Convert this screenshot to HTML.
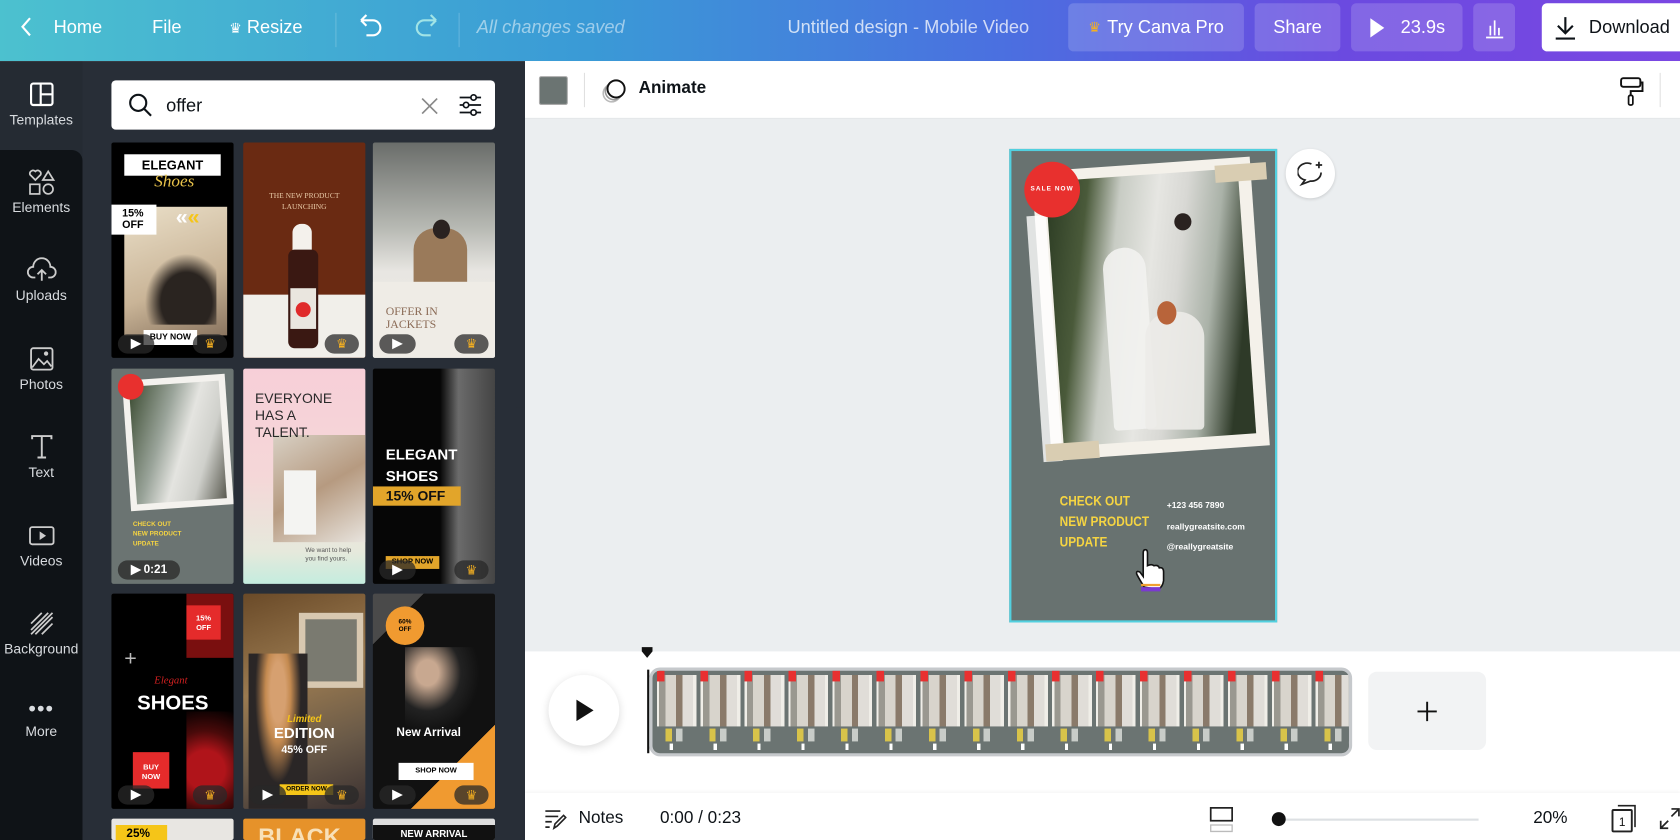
<!DOCTYPE html>
<html><head><meta charset="utf-8">
<style>
*{box-sizing:border-box;margin:0;padding:0}
html,body{width:1680px;height:840px;overflow:hidden;background:#fff;font-family:"Liberation Sans",sans-serif}
#w{position:absolute;left:0;top:0;width:1568px;height:784px;transform:scale(1.07143);transform-origin:0 0;overflow:hidden}
.a{position:absolute}
.top{left:0;top:0;width:1568px;height:57px;background:linear-gradient(90deg,#4cc1cf 0%,#3a9ad6 35%,#4b6fe0 60%,#6b4ae0 80%,#7a47e2 100%)}
.tt{position:absolute;color:#fff;font-size:17px;top:16px}
.btn{position:absolute;top:3px;height:45px;background:rgba(255,255,255,.16);border-radius:5px;color:#fff;font-size:17px;display:flex;align-items:center;justify-content:center}
.side{left:0;top:57px;width:77px;height:727px;background:#252b33}
.sdark{left:0;top:140px;width:77px;height:644px;background:#0f1317;border-top-right-radius:10px}
.si{position:absolute;left:0;width:77px;text-align:center;color:#d8dbdf;font-size:13px}
.si svg{display:block;margin:0 auto 4px}
.panel{left:77px;top:57px;width:413px;height:727px;background:#282e37}
.th{position:absolute;width:114px;height:201px;overflow:hidden;border-radius:2px}
.pl{position:absolute;left:6px;bottom:4px;width:34px;height:18px;border-radius:9px;background:rgba(40,40,40,.75)}
.pl:after{content:"";position:absolute;left:12px;top:4px;border-left:10px solid #fff;border-top:5px solid transparent;border-bottom:5px solid transparent}
.cr{position:absolute;right:6px;bottom:4px;width:32px;height:18px;border-radius:9px;background:rgba(40,40,40,.75);color:#f5b021;font-size:12px;text-align:center;line-height:18px}
.canvas{left:490px;top:111px;width:1078px;height:497px;background:#ebeef0}
.tool{left:490px;top:57px;width:1078px;height:54px;background:#fff;border-bottom:1px solid #e3e6e8}
.bot{left:490px;top:608px;width:1078px;height:176px;background:#fff}
</style></head><body><div id="w">
<div class="a top"></div>
<svg class="a" style="left:18px;top:15px" width="14" height="20"><path d="M10 2 L3 10 L10 18" stroke="#fff" stroke-width="2" fill="none"/></svg>
<div class="tt" style="left:50px">Home</div>
<div class="tt" style="left:142px">File</div>
<div class="tt" style="left:214px"><span style="font-size:13px">♛</span> Resize</div>
<div class="a" style="left:313px;top:12px;width:1px;height:32px;background:rgba(255,255,255,.2)"></div>
<svg class="a" style="left:333px;top:13px" width="26" height="24"><path d="M4 6 H15 A7 7 0 0 1 15 20 H9 M4 6 L9 1 M4 6 L9 11" stroke="#fff" stroke-width="2" fill="none"/></svg>
<svg class="a" style="left:385px;top:13px" width="26" height="24"><path d="M22 6 H11 A7 7 0 0 0 11 20 H17 M22 6 L17 1 M22 6 L17 11" stroke="#cfe" stroke-opacity=".7" stroke-width="2" fill="none"/></svg>
<div class="a" style="left:428px;top:12px;width:1px;height:32px;background:rgba(255,255,255,.2)"></div>
<div class="tt" style="left:445px;font-style:italic;color:rgba(255,255,255,.5)">All changes saved</div>
<div class="tt" style="left:735px;color:rgba(255,255,255,.75)">Untitled design - Mobile Video</div>
<div class="btn" style="left:997px;width:164px"><span style="color:#f5b021;font-size:13px;margin-right:6px">♛</span>Try Canva Pro</div>
<div class="btn" style="left:1171px;width:80px">Share</div>
<div class="btn" style="left:1261px;width:104px"><svg width="16" height="20" style="margin-right:14px"><path d="M2 1 L15 10 L2 19Z" fill="#fff"/></svg>23.9s</div>
<div class="btn" style="left:1375px;width:39px"><svg width="20" height="20"><path d="M2 19H18M6 17V8M10 17V3M14 17V10" stroke="#fff" stroke-width="1.6" fill="none"/></svg></div>
<div class="a" style="left:1439px;top:3px;width:140px;height:45px;background:#fff;border-radius:5px;color:#0e1318;font-size:17px;line-height:45px;padding-left:44px">Download</div>
<svg class="a" style="left:1450px;top:14px" width="22" height="24"><path d="M11 2V17M4 10L11 17L18 10M2 22H20" stroke="#0e1318" stroke-width="2" fill="none"/></svg>

<div class="a side"></div>
<div class="a sdark"></div>
<div class="si" style="top:76px"><svg width="24" height="24"><rect x="2" y="2" width="20" height="20" rx="2" stroke="#fff" stroke-width="2" fill="none"/><path d="M11 2V22M11 12H22" stroke="#fff" stroke-width="2"/></svg>Templates</div>
<div class="si" style="top:158px"><svg width="26" height="24"><path d="M7 10 L2 5 A3 3 0 0 1 7 2 A3 3 0 0 1 12 5Z M19 2 L24 10 H14Z" stroke="#ccc" stroke-width="1.6" fill="none"/><rect x="2" y="14" width="9" height="9" stroke="#ccc" stroke-width="1.6" fill="none"/><circle cx="19" cy="18.5" r="4.5" stroke="#ccc" stroke-width="1.6" fill="none"/></svg>Elements</div>
<div class="si" style="top:240px"><svg width="28" height="24"><path d="M8 19H6A5 5 0 0 1 6 9A8 8 0 0 1 22 9A5 5 0 0 1 22 19H20M14 22V12M10 16L14 12L18 16" stroke="#ccc" stroke-width="1.7" fill="none"/></svg>Uploads</div>
<div class="si" style="top:323px"><svg width="24" height="24"><rect x="2" y="2" width="20" height="20" rx="2" stroke="#ccc" stroke-width="1.7" fill="none"/><path d="M3 20L9 12L14 17L17 14L21 19" stroke="#ccc" stroke-width="1.6" fill="none"/><circle cx="16" cy="7" r="2" fill="#ccc"/></svg>Photos</div>
<div class="si" style="top:405px"><svg width="24" height="24"><path d="M3 5V2H21V5M12 2V22M8 22H16" stroke="#ccc" stroke-width="1.8" fill="none"/></svg>Text</div>
<div class="si" style="top:488px"><svg width="26" height="24"><rect x="2" y="4" width="22" height="16" rx="2" stroke="#ccc" stroke-width="1.7" fill="none"/><path d="M11 8L17 12L11 16Z" fill="#ccc"/></svg>Videos</div>
<div class="si" style="top:570px"><svg width="24" height="24"><path d="M2 12L12 2M2 18L18 2M2 22L22 2M6 22L22 6M12 22L22 12" stroke="#ccc" stroke-width="1.6"/></svg>Background</div>
<div class="si" style="top:655px"><div style="font-size:20px;line-height:14px;letter-spacing:1px;margin-bottom:6px">•••</div>More</div>

<div class="a panel"></div>
<div class="a" style="left:104px;top:75px;width:358px;height:46px;background:#fff;border-radius:4px"></div>
<svg class="a" style="left:119px;top:86px" width="24" height="24"><circle cx="10" cy="10" r="7.5" stroke="#0e1318" stroke-width="2" fill="none"/><path d="M15.5 15.5L22 22" stroke="#0e1318" stroke-width="2"/></svg>
<div class="a" style="left:155px;top:89px;font-size:17px;color:#0e1318">offer</div>
<svg class="a" style="left:392px;top:90px" width="18" height="18"><path d="M2 2L16 16M16 2L2 16" stroke="#888" stroke-width="1.6"/></svg>
<svg class="a" style="left:427px;top:86px" width="24" height="24"><path d="M2 5H22M2 12H22M2 19H22" stroke="#0e1318" stroke-width="1.6"/><circle cx="15" cy="5" r="2.5" fill="#fff" stroke="#0e1318" stroke-width="1.6"/><circle cx="8" cy="12" r="2.5" fill="#fff" stroke="#0e1318" stroke-width="1.6"/><circle cx="15" cy="19" r="2.5" fill="#fff" stroke="#0e1318" stroke-width="1.6"/></svg>

<div class="th" style="left:104px;top:133px;background:#000">
 <div class="a" style="left:12px;top:60px;width:96px;height:120px;background:linear-gradient(160deg,#eadfc8,#c9b497 60%,#8a7560)"></div>
 <div class="a" style="left:28px;top:100px;width:70px;height:70px;background:radial-gradient(ellipse at 60% 70%,#2a2420 40%,transparent 65%)"></div>
 <div class="a" style="left:12px;top:11px;width:90px;height:20px;background:#fff;font:bold 12px 'Liberation Sans';text-align:center;line-height:20px">ELEGANT</div>
 <div class="a" style="left:40px;top:28px;color:#e8c24a;font:italic 16px 'Liberation Serif'">Shoes</div>
 <div class="a" style="left:0;top:58px;width:42px;height:28px;background:#fff;font:bold 10px 'Liberation Sans';padding:3px 10px;line-height:11px">15%<br>OFF</div>
 <div class="a" style="left:60px;top:59px;color:#fff;font:bold 20px 'Liberation Sans'">«<span style="color:#f5c518">«</span></div>
 <div class="a" style="left:30px;top:175px;width:50px;height:14px;background:#fff;font:bold 8px 'Liberation Sans';text-align:center;line-height:14px">BUY NOW</div>
 <div class="pl"></div><div class="cr">♛</div>
</div>
<div class="th" style="left:227px;top:133px;background:#6a2a12">
 <div class="a" style="left:0;top:142px;width:114px;height:59px;background:#f1efea"></div>
 <div class="a" style="left:0;top:45px;width:114px;color:#e8c9a6;font:7px 'Liberation Serif';text-align:center;line-height:10px">THE NEW PRODUCT<br>LAUNCHING</div>
 <div class="a" style="left:46px;top:76px;width:18px;height:26px;background:#f4f1ec;border-radius:8px 8px 2px 2px"></div>
 <div class="a" style="left:42px;top:100px;width:28px;height:92px;background:#3a1812;border-radius:6px"></div>
 <div class="a" style="left:44px;top:136px;width:24px;height:38px;background:#eae6df"></div>
 <div class="a" style="left:49px;top:149px;width:14px;height:14px;background:#e02a2a;border-radius:50%"></div>
 <div class="cr">♛</div>
</div>
<div class="th" style="left:348px;top:133px;background:linear-gradient(180deg,#6a6d6a,#b8bab4 40%,#e8e6e2 60%,#efede8)">
 <div class="a" style="left:38px;top:80px;width:50px;height:60px;background:#9a7a5a;border-radius:20px 20px 0 0"></div>
 <div class="a" style="left:56px;top:72px;width:16px;height:18px;background:#2a2220;border-radius:50%"></div>
 <div class="a" style="left:0;top:130px;width:114px;height:71px;background:#efece6"></div>
 <div class="a" style="left:12px;top:152px;color:#8a6a55;font:11px 'Liberation Serif';line-height:12px">OFFER IN<br>JACKETS</div>
 <div class="pl"></div><div class="cr">♛</div>
</div>
<div class="th" style="left:104px;top:344px;background:#6b7472">
 <div class="a" style="left:14px;top:8px;width:96px;height:122px;background:#f4f2ee;transform:rotate(-4deg)"></div>
 <div class="a" style="left:20px;top:14px;width:84px;height:110px;background:linear-gradient(110deg,#3a4a30,#9aa49a 35%,#e4e4e0 55%,#cfd0cb 75%,#5a5a50);transform:rotate(-4deg)"></div>
 <div class="a" style="left:6px;top:5px;width:24px;height:24px;background:#e8302e;border-radius:50%"></div>
 <div class="a" style="left:20px;top:142px;color:#f5d442;font:bold 6px 'Liberation Sans';line-height:9px">CHECK OUT<br>NEW PRODUCT<br>UPDATE</div>
 <div class="pl" style="width:58px"></div><div class="a" style="left:30px;bottom:7px;color:#fff;font:bold 11px 'Liberation Sans'">0:21</div>
</div>
<div class="th" style="left:227px;top:344px;background:linear-gradient(180deg,#f7cfd8,#f5d7d8 50%,#e6e9dc 85%,#c4ecde)">
 <div class="a" style="left:28px;top:62px;width:86px;height:100px;background:linear-gradient(150deg,#d8d0c4,#b69a80 50%,#e8e4de)"></div>
 <div class="a" style="left:38px;top:95px;width:30px;height:60px;background:#f4f4f2"></div>
 <div class="a" style="left:11px;top:20px;color:#2a2a2a;font:13px 'Liberation Sans';line-height:16px">EVERYONE<br>HAS A<br>TALENT.</div>
 <div class="a" style="left:58px;top:166px;color:#555;font:6px 'Liberation Sans';line-height:8px">We want to help<br>you find yours.</div>
</div>
<div class="th" style="left:348px;top:344px;background:linear-gradient(90deg,#060606 55%,#6b6b6b 70%,#444)">
 <div class="a" style="left:12px;top:70px;color:#fff;font:bold 14px 'Liberation Sans';line-height:20px">ELEGANT<br>SHOES</div>
 <div class="a" style="left:0;top:110px;width:82px;height:18px;background:#e2a52a;color:#111;font:bold 13px 'Liberation Sans';padding-left:12px;line-height:18px">15% OFF</div>
 <div class="a" style="left:12px;top:175px;width:50px;height:12px;background:#e2a52a;font:bold 7px 'Liberation Sans';text-align:center;line-height:12px">SHOP NOW</div>
 <div class="pl"></div><div class="cr">♛</div>
</div>
<div class="th" style="left:104px;top:554px;background:#000">
 <div class="a" style="left:70px;top:0;width:44px;height:60px;background:#7a0f0f"></div>
 <div class="a" style="left:70px;top:11px;width:32px;height:32px;background:#e52b2b;color:#fff;font:bold 7px 'Liberation Sans';text-align:center;padding-top:8px;line-height:9px">15%<br>OFF</div>
 <div class="a" style="left:12px;top:50px;color:#bbb;font:20px 'Liberation Sans'">+</div>
 <div class="a" style="left:70px;top:110px;width:44px;height:91px;background:radial-gradient(circle at 40% 60%,#b0141a 30%,#4a0a0a 60%,#000)"></div>
 <div class="a" style="left:40px;top:76px;color:#d02020;font:italic 10px 'Liberation Serif'">Elegant</div>
 <div class="a" style="left:24px;top:92px;color:#fff;font:bold 19px 'Liberation Sans'">SHOES</div>
 <div class="a" style="left:20px;top:148px;width:34px;height:34px;background:#e52b2b;color:#fff;font:bold 7px 'Liberation Sans';text-align:center;padding-top:10px;line-height:9px">BUY<br>NOW</div>
 <div class="pl"></div><div class="cr">♛</div>
</div>
<div class="th" style="left:227px;top:554px;background:linear-gradient(160deg,#6a4a28,#9a7a50 40%,#6a5a48 70%,#3a3030)">
 <div class="a" style="left:52px;top:18px;width:60px;height:70px;border:6px solid #d8c8b0;background:#7a7a70"></div>
 <div class="a" style="left:5px;top:56px;width:55px;height:145px;background:radial-gradient(ellipse at 50% 25%,#d6a070 18%,#c48a50 30%,#2a2626 55%)"></div>
 <div class="a" style="left:0;top:112px;width:114px;text-align:center;color:#f5c518;font:italic bold 9px 'Liberation Sans'">Limited</div>
 <div class="a" style="left:0;top:122px;width:114px;text-align:center;color:#fff;font:bold 14px 'Liberation Sans'">EDITION</div>
 <div class="a" style="left:0;top:141px;width:114px;text-align:center;color:#fff;font:bold 10px 'Liberation Sans'">45% OFF</div>
 <div class="a" style="left:34px;top:178px;width:50px;height:10px;background:#f5c518;font:bold 6px 'Liberation Sans';text-align:center;line-height:10px">ORDER NOW</div>
 <div class="pl"></div><div class="cr">♛</div>
</div>
<div class="th" style="left:348px;top:554px;background:linear-gradient(135deg,#4a4a4a 15%,#111 15%,#111 75%,#f09a30 75%)">
 <div class="a" style="left:12px;top:12px;width:36px;height:36px;background:#f09a30;border-radius:50%;font:bold 6px 'Liberation Sans';text-align:center;padding-top:12px;line-height:7px">60%<br>OFF</div>
 <div class="a" style="left:30px;top:50px;width:70px;height:80px;background:radial-gradient(ellipse at 30% 30%,#c8a890 15%,#222 45%,transparent 70%)"></div>
 <div class="a" style="left:22px;top:124px;color:#fff;font:bold 11px 'Liberation Sans'">New Arrival</div>
 <div class="a" style="left:24px;top:158px;width:70px;height:16px;background:#fff;font:bold 7px 'Liberation Sans';text-align:center;line-height:16px">SHOP NOW</div>
 <div class="pl"></div><div class="cr">♛</div>
</div>
<div class="th" style="left:104px;top:764px;height:20px;background:#e8e6e2"><div class="a" style="left:4px;top:6px;width:48px;height:14px;background:#f5c518;font:bold 11px 'Liberation Sans';padding:2px 10px">25%</div></div>
<div class="th" style="left:227px;top:764px;height:20px;background:#e6922a"><div class="a" style="left:14px;top:4px;color:#f8e0b8;font:bold 22px 'Liberation Sans'">BLACK</div></div>
<div class="th" style="left:348px;top:764px;height:20px;background:#ddd"><div class="a" style="left:0;top:6px;width:114px;height:14px;background:#111;color:#fff;font:bold 9px 'Liberation Sans';text-align:center;padding-top:3px">NEW ARRIVAL</div></div>

<div class="a" style="left:482px;top:380px;width:22px;height:86px;background:#282e37;border-radius:0 12px 12px 0"></div>
<svg class="a" style="left:489px;top:417px" width="10" height="12"><path d="M7 2L3 6L7 10" stroke="#fff" stroke-width="1.6" fill="none"/></svg>

<div class="a tool"></div>
<div class="a" style="left:503px;top:71px;width:27px;height:27px;background:#6b7472;border:1px solid #aaa;border-radius:2px"></div>
<div class="a" style="left:545px;top:68px;width:1px;height:32px;background:#e0e0e0"></div>
<svg class="a" style="left:561px;top:72px" width="26" height="26"><circle cx="10" cy="15" r="8" stroke="#bbb" stroke-width="1.5" fill="#fff"/><circle cx="12" cy="13" r="8" stroke="#999" stroke-width="1.5" fill="#fff"/><circle cx="14" cy="11" r="8" stroke="#111" stroke-width="1.8" fill="#fff"/></svg>
<div class="a" style="left:596px;top:74px;font:bold 16px 'Liberation Sans';color:#0e1318">Animate</div>
<svg class="a" style="left:1510px;top:71px" width="24" height="28"><rect x="3" y="2" width="18" height="8" rx="2" stroke="#111" stroke-width="1.8" fill="none"/><path d="M21 6H23V14H12V18" stroke="#111" stroke-width="1.8" fill="none"/><rect x="10" y="18" width="4" height="9" rx="1.5" stroke="#111" stroke-width="1.6" fill="none"/></svg>
<div class="a" style="left:1549px;top:68px;width:1px;height:32px;background:#e0e0e0"></div>

<div class="a canvas"></div>
<div class="a" style="left:942px;top:139px;width:250px;height:442px;background:#687270;border:2px solid #52d0df;overflow:hidden">
 <div class="a" style="left:28px;top:12px;width:204px;height:270px;background:#f4f1ea;transform:rotate(-4deg);transform-origin:50% 50%"></div>
 <div class="a" style="left:22px;top:60px;width:18px;height:230px;background:#fff;opacity:.8;transform:rotate(-4deg)"></div>
 <div class="a" style="left:40px;top:22px;width:180px;height:248px;background:linear-gradient(100deg,#2a3a22 0%,#4a5a3a 18%,#c8ccc4 32%,#e6e6e2 48%,#d8d8d4 60%,#aab2a8 75%,#2e3a28 90%);transform:rotate(-4deg)"></div>
 <div class="a" style="left:90px;top:90px;width:40px;height:170px;background:#f2f2ef;border-radius:20px 20px 4px 4px;opacity:.9;transform:rotate(-4deg)"></div>
 <div class="a" style="left:125px;top:150px;width:55px;height:110px;background:#ecebe8;border-radius:24px 24px 4px 4px;opacity:.9"></div>
 <div class="a" style="left:136px;top:140px;width:18px;height:22px;background:#b8643a;border-radius:50%"></div>
 <div class="a" style="left:152px;top:58px;width:16px;height:16px;background:#2a2220;border-radius:50%"></div>
 <div class="a" style="left:190px;top:12px;width:48px;height:16px;background:#d9cdb2;transform:rotate(-4deg)"></div>
 <div class="a" style="left:32px;top:272px;width:50px;height:16px;background:#d9cdb2;transform:rotate(-4deg)"></div>
 <div class="a" style="left:12px;top:10px;width:52px;height:52px;background:#e8302e;border-radius:50%;color:#fff;font:bold 6px 'Liberation Sans';text-align:center;line-height:52px;letter-spacing:1px">SALE NOW</div>
 <div class="a" style="left:45px;top:317px;color:#f5d442;font:bold 13px 'Liberation Sans';line-height:19px;transform:scaleX(.85);transform-origin:0 0">CHECK OUT<br>NEW PRODUCT<br>UPDATE</div>
 <div class="a" style="left:145px;top:321px;color:#fff;font:bold 8px 'Liberation Sans';line-height:19.5px">+123 456 7890<br>reallygreatsite.com<br>@reallygreatsite</div>
</div>
<svg class="a" style="left:1055px;top:510px" width="34" height="44"><path d="M13 38 Q8 30 6 26 Q5 22 9 24 L12 28 V6 Q12 3 14 3 Q16 3 16 6 V18 Q20 16 22 18 Q26 17 27 20 Q31 19 31 24 V32 Q30 38 26 40Z" fill="#fff" stroke="#111" stroke-width="1.5"/><path d="M10 38 H28 V42 H10Z" fill="#7a3ad0"/><path d="M10 36 H28" stroke="#f0a030" stroke-width="2"/></svg>
<div class="a" style="left:1200px;top:139px;width:46px;height:46px;background:#fff;border-radius:50%;box-shadow:0 1px 3px rgba(0,0,0,.15)"></div>
<svg class="a" style="left:1211px;top:150px" width="26" height="24"><path d="M13 3A9 8 0 1 0 7 18L4 22L12 19A9 8 0 0 0 22 11" stroke="#222" stroke-width="1.6" fill="none"/><path d="M20 1V7M17 4H23" stroke="#222" stroke-width="1.6"/></svg>

<div class="a bot"></div>
<div class="a" style="left:490px;top:740px;width:1078px;height:44px;background:#fff;box-shadow:0 -1px 3px rgba(0,0,0,.06)"></div>
<svg class="a" style="left:598px;top:603px" width="12" height="12"><path d="M1 1H11V5L6 11L1 5Z" fill="#111"/></svg>
<div class="a" style="left:604px;top:625px;width:2px;height:78px;background:#111"></div>
<div class="a" style="left:512px;top:630px;width:66px;height:66px;border-radius:50%;background:#fff;box-shadow:0 2px 8px rgba(0,0,0,.15)"></div>
<svg class="a" style="left:536px;top:652px" width="20" height="22"><path d="M2 1L18 11L2 21Z" fill="#111"/></svg>
<div class="a" style="left:606px;top:623px;width:656px;height:83px;border:3px solid #c6c9cc;border-radius:10px;background:#6b7472;overflow:hidden">
 <div class="a" style="left:4px;top:4px;width:646px;height:48px;background:repeating-linear-gradient(90deg,#f0eee8 0 2px,#9a9890 2px 8px,#d8d4cc 8px 18px,#8a7a6a 18px 24px,#e0ddd8 24px 34px,#f0eee8 34px 37px,#6b7472 37px 41px)"></div>
 <div class="a" style="left:4px;top:0;width:646px;height:10px;background:repeating-linear-gradient(90deg,#e83030 0 7px,transparent 7px 41px)"></div>
 <div class="a" style="left:12px;top:54px;width:640px;height:12px;background:repeating-linear-gradient(90deg,#d8c34a 0 6px,#6b7472 6px 10px,#c8ccc8 10px 16px,#6b7472 16px 41px)"></div>
 <div class="a" style="left:16px;top:68px;width:640px;height:6px;background:repeating-linear-gradient(90deg,#fff 0 3px,#6b7472 3px 41px)"></div>
</div>
<div class="a" style="left:1277px;top:627px;width:110px;height:73px;background:#f2f3f4;border-radius:8px"></div>
<svg class="a" style="left:1322px;top:654px" width="20" height="20"><path d="M10 1V19M1 10H19" stroke="#111" stroke-width="1.8"/></svg>

<svg class="a" style="left:507px;top:753px" width="22" height="22"><path d="M2 4H16M2 9H14M2 14H8M2 19H6" stroke="#222" stroke-width="1.6"/><path d="M10 20L11 16L19 8L21 10L13 18Z" stroke="#222" stroke-width="1.5" fill="none"/></svg>
<div class="a" style="left:540px;top:755px;font-size:16px;color:#0e1318">Notes</div>
<div class="a" style="left:616px;top:755px;font-size:16px;color:#0e1318">0:00 / 0:23</div>
<svg class="a" style="left:1128px;top:752px" width="24" height="26"><rect x="2" y="2" width="20" height="12" stroke="#222" stroke-width="1.6" fill="none"/><path d="M2 18H22V24H2Z" stroke="#bbb" stroke-width="1.2" fill="none"/></svg>
<div class="a" style="left:1193px;top:764px;width:187px;height:2px;background:#dde0e3"></div>
<div class="a" style="left:1187px;top:758px;width:13px;height:13px;background:#111;border-radius:50%"></div>
<div class="a" style="left:1431px;top:755px;font-size:16px;color:#0e1318">20%</div>
<svg class="a" style="left:1502px;top:750px" width="26" height="28"><path d="M8 2H24V22" stroke="#222" stroke-width="1.5" fill="none"/><rect x="3" y="6" width="18" height="20" rx="1" stroke="#222" stroke-width="1.8" fill="#fff"/><text x="9" y="21" font-size="11" font-family="Liberation Sans" fill="#111">1</text></svg>
<svg class="a" style="left:1548px;top:752px" width="20" height="24"><path d="M12 3H19V10M19 3L12 10M2 14V21H9M2 21L9 14" stroke="#222" stroke-width="1.6" fill="none"/></svg>
</div></body></html>
